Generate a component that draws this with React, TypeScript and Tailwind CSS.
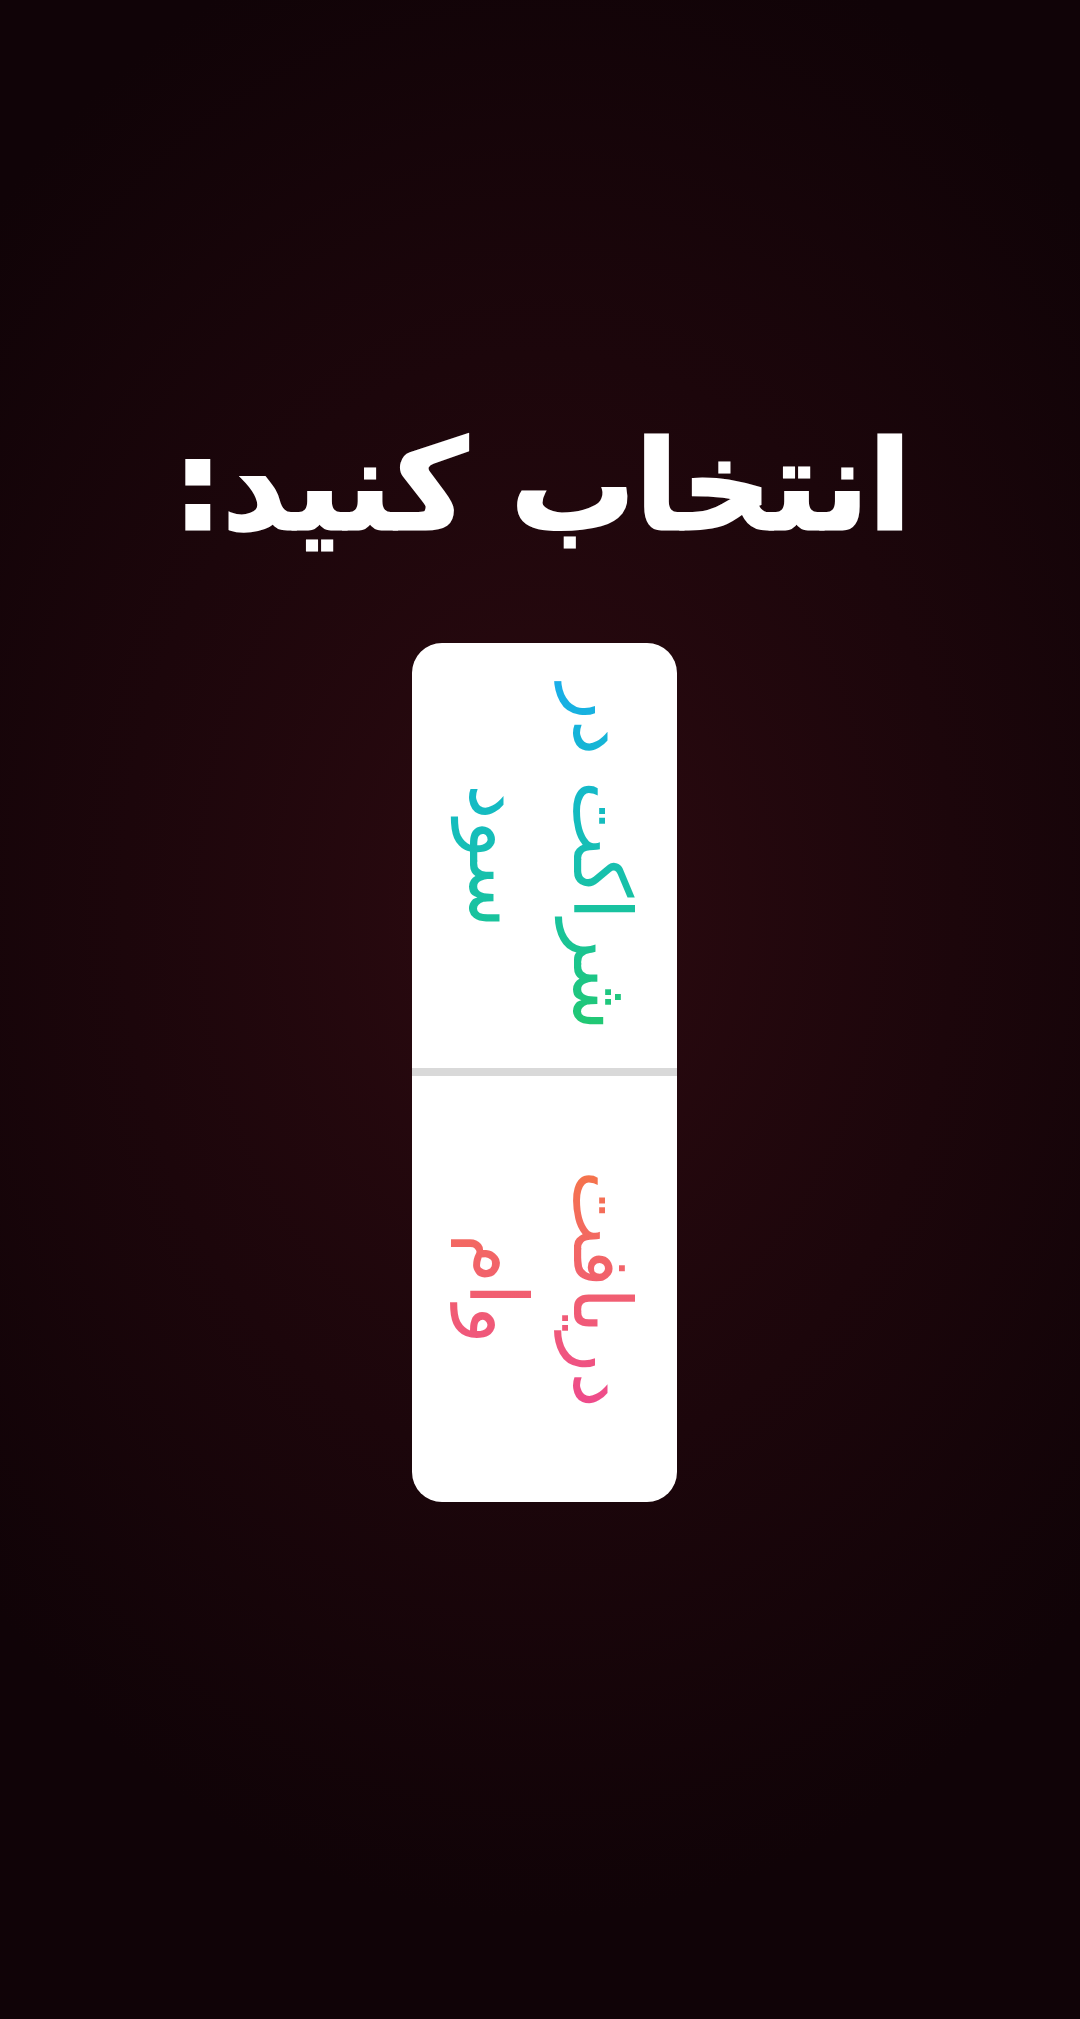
import React from "react";

export default function App() {
  return (
    <div
      className="relative w-full min-h-[2019px] flex flex-col items-center bg-[radial-gradient(ellipse_70%_50%_at_50%_45%,#2c0a10_0%,#1c060b_55%,#100307_100%)]"
      style={{ fontFamily: '"DejaVu Sans", "Noto Sans", sans-serif' }}
    >
      <h1
        dir="rtl"
        className="mt-[410px] text-white font-bold text-[124px] leading-[152px] whitespace-nowrap ml-[4px] [-webkit-text-stroke:3px_white]"
      >
        انتخاب کنید:
      </h1>
      <div className="mt-[81px] ml-[9px] w-[265px] h-[859px] rounded-[30px] bg-white overflow-hidden flex flex-col">
        <div className="h-[425px] flex items-center justify-center">
          <div
            dir="rtl"
            className="rotate-90 shrink-0 whitespace-nowrap text-center text-[80px] leading-[104px] translate-x-[4px] bg-gradient-to-r from-[#1aaee9] via-[#17bfb2] to-[#22c870] bg-clip-text text-transparent"
          >
            <div>شراکت در</div>
            <div>سود</div>
          </div>
        </div>
        <div className="h-[8px] bg-[#d9d9d9]" />
        <div className="flex-1 flex items-center justify-center">
          <div
            dir="rtl"
            className="rotate-90 shrink-0 whitespace-nowrap text-center text-[80px] leading-[104px] translate-x-[4px] bg-gradient-to-r from-[#f5744a] via-[#f15f6f] to-[#ee4a8c] bg-clip-text text-transparent"
          >
            <div>دریافت</div>
            <div>وام</div>
          </div>
        </div>
      </div>
    </div>
  );
}
